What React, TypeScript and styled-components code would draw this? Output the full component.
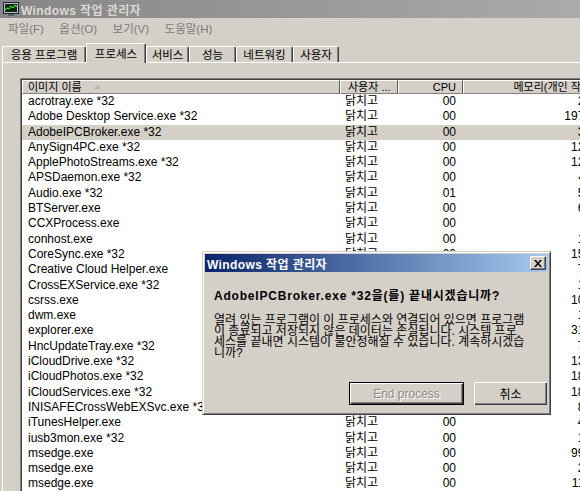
import React from 'react';
import styled, { createGlobalStyle } from 'styled-components';

const UI_FONT = `"Liberation Sans", "Noto Sans CJK KR", sans-serif`;
const COLS = '318px 58px 65px 162px';

type Proc = { name: string; user: string; cpu: string; mem: string };

const processes: Proc[] = [
  { name: 'acrotray.exe *32', user: '닭치고', cpu: '00', mem: '2,316 K' },
  { name: 'Adobe Desktop Service.exe *32', user: '닭치고', cpu: '00', mem: '197,452 K' },
  { name: 'AdobeIPCBroker.exe *32', user: '닭치고', cpu: '00', mem: '3,204 K' },
  { name: 'AnySign4PC.exe *32', user: '닭치고', cpu: '00', mem: '12,088 K' },
  { name: 'ApplePhotoStreams.exe *32', user: '닭치고', cpu: '00', mem: '12,540 K' },
  { name: 'APSDaemon.exe *32', user: '닭치고', cpu: '00', mem: '4,112 K' },
  { name: 'Audio.exe *32', user: '닭치고', cpu: '01', mem: '5,936 K' },
  { name: 'BTServer.exe', user: '닭치고', cpu: '00', mem: '6,220 K' },
  { name: 'CCXProcess.exe', user: '닭치고', cpu: '00', mem: '944 K' },
  { name: 'conhost.exe', user: '닭치고', cpu: '00', mem: '1,052 K' },
  { name: 'CoreSync.exe *32', user: '닭치고', cpu: '00', mem: '15,764 K' },
  { name: 'Creative Cloud Helper.exe', user: '닭치고', cpu: '00', mem: '7,348 K' },
  { name: 'CrossEXService.exe *32', user: '닭치고', cpu: '00', mem: '1,880 K' },
  { name: 'csrss.exe', user: '닭치고', cpu: '00', mem: '10,412 K' },
  { name: 'dwm.exe', user: '닭치고', cpu: '00', mem: '1,640 K' },
  { name: 'explorer.exe', user: '닭치고', cpu: '00', mem: '31,276 K' },
  { name: 'HncUpdateTray.exe *32', user: '닭치고', cpu: '00', mem: '7,020 K' },
  { name: 'iCloudDrive.exe *32', user: '닭치고', cpu: '00', mem: '13,508 K' },
  { name: 'iCloudPhotos.exe *32', user: '닭치고', cpu: '00', mem: '18,132 K' },
  { name: 'iCloudServices.exe *32', user: '닭치고', cpu: '00', mem: '18,904 K' },
  { name: 'INISAFECrossWebEXSvc.exe *32', user: '닭치고', cpu: '00', mem: '8,416 K' },
  { name: 'iTunesHelper.exe', user: '닭치고', cpu: '00', mem: '4,768 K' },
  { name: 'iusb3mon.exe *32', user: '닭치고', cpu: '00', mem: '1,236 K' },
  { name: 'msedge.exe', user: '닭치고', cpu: '00', mem: '99,580 K' },
  { name: 'msedge.exe', user: '닭치고', cpu: '00', mem: '2,044 K' },
  { name: 'msedge.exe', user: '닭치고', cpu: '00', mem: '11,392 K' },
];

const menus = ['파일(F)', '옵션(O)', '보기(V)', '도움말(H)'];

const tabs = [
  { label: '응용 프로그램', w: 84 },
  { label: '프로세스', w: 60, active: true },
  { label: '서비스', w: 43 },
  { label: '성능', w: 47 },
  { label: '네트워킹', w: 57 },
  { label: '사용자', w: 46 },
];

const messageLines = [
  '열려 있는 프로그램이 이 프로세스와 연결되어 있으면 프로그램',
  '이 종료되고 저장되지 않은 데이터는 손실됩니다. 시스템 프로',
  '세스를 끝내면 시스템이 불안정해질 수 있습니다. 계속하시겠습',
  '니까?',
];

const GlobalStyle = createGlobalStyle`
  html, body {
    margin: 0;
    padding: 0;
    background: #d4d0c8;
    overflow: hidden;
  }
  body {
    font-family: ${UI_FONT};
    font-size: 12px;
    color: #000;
  }
`;

const Window = styled.div`
  position: relative;
  width: 580px;
  height: 491px;
  overflow: hidden;
  display: flex;
  flex-direction: column;
  background: #d4d0c8;
`;

const TitleBar = styled.div`
  height: 18px;
  flex-shrink: 0;
  display: flex;
  align-items: center;
  gap: 2px;
  padding-left: 3px;
  background: linear-gradient(90deg, #868686, #aaaaaa);
  color: #dcd9d3;
  font-weight: bold;
  font-size: 12px;
  letter-spacing: 0.4px;
  white-space: nowrap;
`;

const MenuBar = styled.div`
  height: 19px;
  flex-shrink: 0;
  display: flex;
  align-items: center;
  gap: 15.5px;
  padding-left: 8px;
  color: #7b7b7b;
  font-size: 11.5px;
`;

const Body = styled.div`
  flex: 1;
  min-height: 0;
  display: flex;
  flex-direction: column;
  padding-left: 2px;
`;

const TabStrip = styled.div`
  height: 19px;
  flex-shrink: 0;
  margin-top: 6px;
  display: flex;
  align-items: flex-end;
  position: relative;
  z-index: 1;
`;

const Tab = styled.div<{ $active?: boolean; $w: number }>`
  box-sizing: border-box;
  width: ${(p) => p.$w}px;
  height: ${(p) => (p.$active ? 20 : 16)}px;
  margin-bottom: ${(p) => (p.$active ? -1 : 0)}px;
  display: flex;
  align-items: center;
  justify-content: center;
  font-size: 11.5px;
  line-height: 12px;
  white-space: nowrap;
  background: #d4d0c8;
  border-top: 1px solid #fff;
  border-left: 1px solid #fff;
  border-right: 1px solid #404040;
  border-top-left-radius: 2px;
  border-top-right-radius: 2px;
  box-shadow: inset -1px 0 #808080;
`;

const Panel = styled.div`
  flex: 1;
  min-height: 0;
  overflow: hidden;
  border-top: 1px solid #fff;
  border-left: 1px solid #fff;
  padding: 15px 0 0 17px;
`;

const ListView = styled.div`
  width: 640px;
  height: 100%;
  box-sizing: border-box;
  background: #fff;
  border-top: 1px solid #808080;
  border-left: 1px solid #808080;
  box-shadow: inset 1px 1px #404040;
  padding: 1px 0 0 1px;
`;

const HeaderRow = styled.div`
  display: grid;
  grid-template-columns: ${COLS};
  height: 14px;
`;

const HeaderCell = styled.div<{ $right?: boolean; $pad: string }>`
  box-sizing: border-box;
  display: flex;
  align-items: center;
  justify-content: ${(p) => (p.$right ? 'flex-end' : 'flex-start')};
  gap: 12px;
  padding: ${(p) => p.$pad};
  background: #d4d0c8;
  border-top: 1px solid #fff;
  border-left: 1px solid #fff;
  border-right: 1px solid #5a5a5a;
  border-bottom: 1px solid #808080;
  font-size: 11px;
  line-height: 12px;
  white-space: nowrap;
  overflow: hidden;
`;

const Row = styled.div<{ $selected?: boolean }>`
  display: grid;
  grid-template-columns: ${COLS};
  height: 15.3px;
  line-height: 15.3px;
  background: ${(p) => (p.$selected ? '#d4d0c8' : 'transparent')};
`;

const Cell = styled.div<{ $right?: boolean; $pad: string }>`
  padding: ${(p) => p.$pad};
  text-align: ${(p) => (p.$right ? 'right' : 'left')};
  white-space: nowrap;
  overflow: hidden;
`;

const Dialog = styled.div`
  position: absolute;
  left: 202px;
  top: 251px;
  width: 349px;
  height: 164px;
  box-sizing: border-box;
  display: flex;
  flex-direction: column;
  padding: 2px;
  background: #d4d0c8;
  border: 1px solid;
  border-color: #d4d0c8 #404040 #404040 #d4d0c8;
  box-shadow: inset 1px 1px #fff, inset -1px -1px #808080;
  z-index: 5;
`;

const DialogTitle = styled.div`
  height: 18px;
  flex-shrink: 0;
  display: flex;
  align-items: center;
  justify-content: space-between;
  padding: 0 2px 0 2px;
  background: linear-gradient(90deg, #0a246a, #a6caf0);
  color: #fff;
  font-weight: bold;
  font-size: 12px;
  letter-spacing: 0.4px;
`;

const CloseButton = styled.div`
  width: 16px;
  height: 14px;
  box-sizing: border-box;
  display: flex;
  align-items: center;
  justify-content: center;
  background: #d4d0c8;
  border: 1px solid;
  border-color: #fff #404040 #404040 #fff;
  box-shadow: inset -1px -1px #808080;
`;

const DialogBody = styled.div`
  flex: 1;
  display: flex;
  flex-direction: column;
  padding: 17px 1px 7px 9px;
`;

const Heading = styled.div`
  font-weight: bold;
  font-size: 12px;
  line-height: 14px;
  letter-spacing: 0.8px;
  white-space: nowrap;
`;

const Message = styled.div`
  margin-top: 12px;
  font-size: 12px;
  line-height: 11px;
`;

const MessageLine = styled.div`
  white-space: nowrap;
`;

const ButtonRow = styled.div`
  margin-top: auto;
  display: flex;
  justify-content: flex-end;
  gap: 10px;
`;

const DialogButton = styled.button<{ $w: number; $default?: boolean }>`
  width: ${(p) => p.$w}px;
  height: 23px;
  padding: 0;
  font-family: ${UI_FONT};
  font-size: 12px;
  color: #000;
  background: #d4d0c8;
  border: ${(p) => (p.$default ? '1px solid #000' : 'none')};
  box-shadow: inset 1px 1px #fff, inset -1px -1px #404040, inset -2px -2px #808080;

  &:disabled {
    color: #8c8c8c;
    text-shadow: 1px 1px #fff;
  }
`;

const MonitorIcon = () => (
  <svg width="16" height="16" viewBox="0 0 16 16">
    <rect x="0.5" y="1.5" width="15" height="11" fill="#c0c0c0" stroke="#1c1c4a" />
    <rect x="2" y="3" width="12" height="8" fill="#0b2a0b" />
    <polyline points="2,9 4,7 6,8 8,5 10,7 12,4 14,6" fill="none" stroke="#3cff3c" strokeWidth="1" />
    <rect x="5" y="13" width="6" height="2" fill="#606060" />
  </svg>
);

const SortArrow = () => (
  <svg width="7" height="4" viewBox="0 0 7 4">
    <polygon points="3.5,0 7,4 0,4" fill="#b4b4b4" />
  </svg>
);

const CloseGlyph = () => (
  <svg width="8" height="7" viewBox="0 0 8 7">
    <path d="M0 0h2l2 2.5L6 0h2L5 3.5 8 7H6L4 4.5 2 7H0l3-3.5z" fill="#000" />
  </svg>
);

export default function App() {
  return (
    <>
      <GlobalStyle />
      <Window>
        <TitleBar>
          <MonitorIcon />
          Windows 작업 관리자
        </TitleBar>
        <MenuBar>
          {menus.map((m) => (
            <span key={m}>{m}</span>
          ))}
        </MenuBar>
        <Body>
          <TabStrip>
            {tabs.map((t) => (
              <Tab key={t.label} $w={t.w} $active={t.active}>
                {t.label}
              </Tab>
            ))}
          </TabStrip>
          <Panel>
            <ListView>
              <HeaderRow>
                <HeaderCell $pad="0 0 0 5px">
                  이미지 이름
                  <SortArrow />
                </HeaderCell>
                <HeaderCell $pad="0 0 0 7px">사용자 ...</HeaderCell>
                <HeaderCell $right $pad="0 6px 0 0">CPU</HeaderCell>
                <HeaderCell $right $pad="0 6px 0 0">메모리(개인 작업 집합)</HeaderCell>
              </HeaderRow>
              {processes.map((p, i) => (
                <Row key={i} $selected={p.name === 'AdobeIPCBroker.exe *32'}>
                  <Cell $pad="0 0 0 6px">{p.name}</Cell>
                  <Cell $pad="0 0 0 5px">{p.user}</Cell>
                  <Cell $right $pad="0 7px 0 0">{p.cpu}</Cell>
                  <Cell $right $pad="0 6px 0 0">{p.mem}</Cell>
                </Row>
              ))}
            </ListView>
          </Panel>
        </Body>

        <Dialog>
          <DialogTitle>
            Windows 작업 관리자
            <CloseButton>
              <CloseGlyph />
            </CloseButton>
          </DialogTitle>
          <DialogBody>
            <Heading>AdobeIPCBroker.exe *32을(를) 끝내시겠습니까?</Heading>
            <Message>
              {messageLines.map((line) => (
                <MessageLine key={line}>{line}</MessageLine>
              ))}
            </Message>
            <ButtonRow>
              <DialogButton $w={115} $default disabled>
                End process
              </DialogButton>
              <DialogButton $w={73}>취소</DialogButton>
            </ButtonRow>
          </DialogBody>
        </Dialog>
      </Window>
    </>
  );
}
